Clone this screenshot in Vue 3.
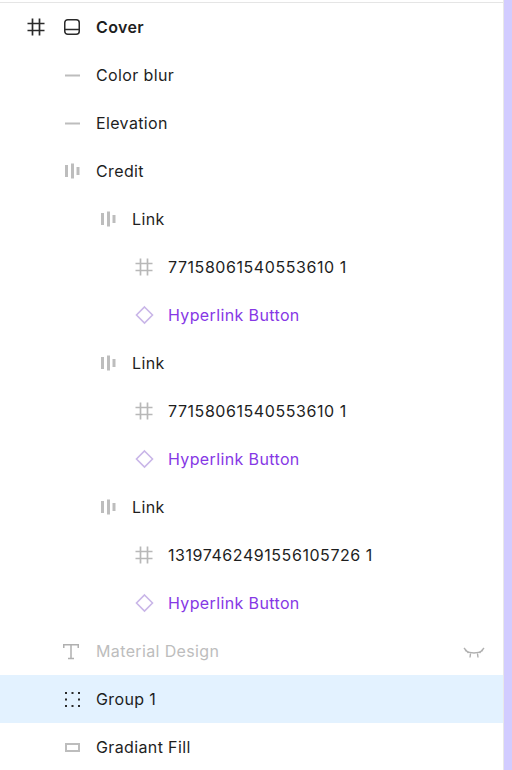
<template>
  <div class="page">
    <div class="tree">
      <div class="rule"></div>
      <div v-for="(row, i) in rows" :key="i"
           :class="['row', { selected: row.selected, hidden: row.hidden }]">
        <svg v-if="row.top" class="icon top-icon" width="24" height="24" viewBox="0 0 24 24">
          <path d="M8.500 3.500v17M15.500 3.500v17M3.500 8.500h17M3.500 15.500h17" fill="none" stroke="#2a2a2a" stroke-width="1.700" />
        </svg>
        <svg class="icon" :style="{ marginLeft: row.indent + 'px' }" width="24" height="24" viewBox="0 0 24 24">
          <template v-if="row.icon === 'cover'">
            <rect x="4.750" y="4.750" width="14.500" height="14.500" rx="3" fill="none" stroke="#2a2a2a" stroke-width="1.500" />
            <path d="M5 14.500h14" stroke="#2a2a2a" stroke-width="1.500" />
          </template>
          <path v-else-if="row.icon === 'line'" d="M5 12.500h15" stroke="#bdbdbd" stroke-width="2" />
          <path v-else-if="row.icon === 'stack'" d="M6.500 6v12M12.500 4.500v15M18 8v8" stroke="#bdbdbd" stroke-width="3" fill="none" />
          <path v-else-if="row.icon === 'frame'" d="M8.500 3.500v17M15.500 3.500v17M3.500 8.500h17M3.500 15.500h17" fill="none" stroke="#b8b8b8" stroke-width="1.700" />
          <path v-else-if="row.icon === 'diamond'" d="M12.500 4 20.500 12 12.500 20 4.500 12Z" fill="none" stroke="#c9b6e8" stroke-width="1.600" />
          <path v-else-if="row.icon === 'text'" d="M3.750 9V5.750h14.500V9M11 5.750V19.500M8 19.500h6" fill="none" stroke="#b0b0b0" stroke-width="1.500" />
          <path v-else-if="row.icon === 'group'" d="M5 6h2M11.500 6h2M18 6h2M5 12.500h2M18 12.500h2M5 19h2M11.500 19h2M18 19h2" stroke="#2a2a2a" stroke-width="2" />
          <rect v-else-if="row.icon === 'rect'" x="6" y="9" width="13" height="7" fill="none" stroke="#bdbdbd" stroke-width="2" />
        </svg>
        <span :class="['label', row.kind]">{{ row.label }}</span>
        <svg v-if="row.hidden" class="eye" width="24" height="24" viewBox="0 0 24 24">
          <path d="M3 11.500Q12 16.500 21 11.500M2 9 6.500 14M22 9 17.500 14M8.500 14.500 8 18.500M15.500 14.500 16 18.500" fill="none" stroke="#b0b0b0" stroke-width="1.400" />
        </svg>
      </div>
    </div>
    <div class="side"></div>
  </div>
</template>

<script setup>
const rows = [
  { label: 'Cover', icon: 'cover', indent: 12, top: true, kind: 'bold' },
  { label: 'Color blur', icon: 'line', indent: 60 },
  { label: 'Elevation', icon: 'line', indent: 60 },
  { label: 'Credit', icon: 'stack', indent: 60 },
  { label: 'Link', icon: 'stack', indent: 96 },
  { label: '77158061540553610 1', icon: 'frame', indent: 132, kind: 'digits' },
  { label: 'Hyperlink Button', icon: 'diamond', indent: 132, kind: 'purple' },
  { label: 'Link', icon: 'stack', indent: 96 },
  { label: '77158061540553610 1', icon: 'frame', indent: 132, kind: 'digits' },
  { label: 'Hyperlink Button', icon: 'diamond', indent: 132, kind: 'purple' },
  { label: 'Link', icon: 'stack', indent: 96 },
  { label: '13197462491556105726 1', icon: 'frame', indent: 132, kind: 'digits' },
  { label: 'Hyperlink Button', icon: 'diamond', indent: 132, kind: 'purple' },
  { label: 'Material Design', icon: 'text', indent: 60, hidden: true, kind: 'muted' },
  { label: 'Group 1', icon: 'group', indent: 60, selected: true },
  { label: 'Gradiant Fill', icon: 'rect', indent: 60 }
]
</script>

<style>
html, body { margin: 0; background: #fff; overflow: hidden; }
</style>

<style scoped>
.page { display: flex; width: 512px; height: 770px; overflow: hidden; font-family: Inter, sans-serif; }
.tree { width: 503px; flex: none; padding-top: 2px; border-right: 1px solid #e8e8e8; }
.rule { height: 1px; background: #e5e5e5; }
.row { display: flex; align-items: center; height: 48px; padding-right: 16px; font-size: 16px; letter-spacing: 0.37px; color: #1e1e1e; }
.row.selected { background: #e3f2ff; }
.icon { flex: none; }
.top-icon { margin-left: 24px; }
.top-icon + .icon { margin-left: 12px; }
.label { margin-left: 12px; white-space: nowrap; }
.label.bold { font-weight: 600; }
.label.digits { letter-spacing: 0.56px; }
.label.purple { color: #8638e5; }
.label.muted { color: #bdbdbd; }
.eye { margin-left: auto; margin-right: 1px; }
.side { flex: 1; background: #d2ccff; }
</style>
